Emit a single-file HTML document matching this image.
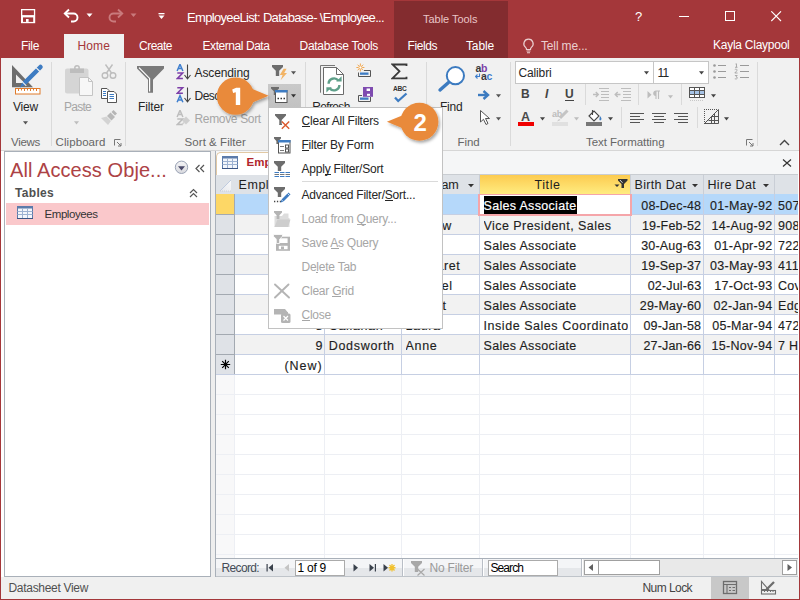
<!DOCTYPE html>
<html><head><meta charset="utf-8"><style>
html,body{margin:0;padding:0;width:800px;height:600px;overflow:hidden;background:#fff}
body{position:relative;font-family:"Liberation Sans",sans-serif}
body>div,body>svg{position:absolute;box-sizing:border-box}
</style></head><body>
<div style="left:0px;top:0px;width:800px;height:58px;background:#A4373A;"></div>
<div style="left:394px;top:1px;width:114px;height:57px;background:#832C2F;"></div>
<div style="left:64px;top:34px;width:60px;height:24px;background:#F1F1F1;"></div>
<div style="left:187.00px;top:11px;font-size:13px;line-height:13px;color:#fff;letter-spacing:-0.670px;white-space:nowrap;">EmployeeList: Database- \Employee...</div>
<div style="left:423.00px;top:14px;font-size:11px;line-height:11px;color:#E9C5C6;letter-spacing:-0.030px;white-space:nowrap;">Table Tools</div>
<div style="left:21.00px;top:40px;font-size:12px;line-height:12px;color:#fff;letter-spacing:-0.334px;white-space:nowrap;">File</div>
<div style="left:139.00px;top:40px;font-size:12px;line-height:12px;color:#fff;letter-spacing:-0.503px;white-space:nowrap;">Create</div>
<div style="left:202.50px;top:40px;font-size:12px;line-height:12px;color:#fff;letter-spacing:-0.439px;white-space:nowrap;">External Data</div>
<div style="left:299.50px;top:40px;font-size:12px;line-height:12px;color:#fff;letter-spacing:-0.286px;white-space:nowrap;">Database Tools</div>
<div style="left:407.50px;top:40px;font-size:12px;line-height:12px;color:#fff;letter-spacing:-0.418px;white-space:nowrap;">Fields</div>
<div style="left:466.00px;top:40px;font-size:12px;line-height:12px;color:#fff;letter-spacing:-0.138px;white-space:nowrap;">Table</div>
<div style="left:77.50px;top:40px;font-size:12px;line-height:12px;color:#A4373A;letter-spacing:0.123px;white-space:nowrap;">Home</div>
<div style="left:541.00px;top:40px;font-size:12px;line-height:12px;color:#EBCFD0;letter-spacing:-0.151px;white-space:nowrap;">Tell me...</div>
<div style="left:713.00px;top:39px;font-size:12px;line-height:12px;color:#fff;letter-spacing:-0.253px;white-space:nowrap;">Kayla Claypool</div>
<svg style="left:20px;top:8px;" width="16" height="16" viewBox="0 0 16 16"><rect x="1" y="1" width="14.2" height="14.2" fill="#fff"/><rect x="2.3" y="2.3" width="11.6" height="4.8" fill="#A4373A"/><rect x="3" y="9.4" width="10.2" height="4.5" fill="#A4373A"/><rect x="6" y="11" width="2.6" height="2.9" fill="#fff"/></svg>
<svg style="left:63px;top:8px;" width="17" height="15" viewBox="0 0 17 15"><path d="M2 5.5H10.5A4 4 0 0 1 10.5 13.5H8" fill="none" stroke="#fff" stroke-width="1.9"/><path d="M6 1.5L1.8 5.5L6 9.5" fill="none" stroke="#fff" stroke-width="1.9"/></svg>
<svg style="left:86px;top:13px;" width="7" height="5" viewBox="0 0 7 5"><path d="M0.5 0.5H6.5L3.5 4Z" fill="#fff"/></svg>
<svg style="left:107px;top:8px;" width="17" height="15" viewBox="0 0 17 15"><path d="M15 5.5H6.5A4 4 0 0 0 6.5 13.5H9" fill="none" stroke="#C97A7C" stroke-width="1.9"/><path d="M11 1.5L15.2 5.5L11 9.5" fill="none" stroke="#C97A7C" stroke-width="1.9"/></svg>
<svg style="left:130px;top:13px;" width="7" height="5" viewBox="0 0 7 5"><path d="M0.5 0.5H6.5L3.5 4Z" fill="#C97A7C"/></svg>
<svg style="left:158px;top:12px;" width="7" height="8" viewBox="0 0 7 8"><rect x="0.5" y="1" width="6" height="1.3" fill="#fff"/><path d="M0.5 3.5H6.5L3.5 7Z" fill="#fff"/></svg>
<div style="left:635.00px;top:10px;font-size:13px;line-height:13px;color:#fff;white-space:nowrap;">?</div>
<div style="left:679px;top:16px;width:10px;height:1px;background:#fff;"></div>
<div style="left:725px;top:11px;width:10px;height:10px;background:transparent;border:1px solid #fff;"></div>
<svg style="left:771px;top:11px;" width="11" height="11" viewBox="0 0 11 11"><path d="M0.3 0.3L10 10M10 0.3L0.3 10" stroke="#fff" stroke-width="1.1"/></svg>
<svg style="left:522px;top:38px;" width="13" height="16" viewBox="0 0 13 16"><path d="M6.5 1.2A4.6 4.6 0 0 0 3.6 9.4C4.3 10 4.5 10.6 4.5 11.5H8.5C8.5 10.6 8.7 10 9.4 9.4A4.6 4.6 0 0 0 6.5 1.2Z" fill="none" stroke="#EBCFD0" stroke-width="1.2"/><path d="M4.5 13H8.5M5 14.8H8" stroke="#EBCFD0" stroke-width="1.1"/></svg>
<div style="left:0px;top:58px;width:800px;height:92px;background:#F1F1F1;"></div>
<div style="left:0px;top:150px;width:800px;height:1px;background:#D6D6D6;"></div>
<div style="left:51px;top:62px;width:1px;height:84px;background:#DADADA;"></div>
<div style="left:125px;top:62px;width:1px;height:84px;background:#DADADA;"></div>
<div style="left:305px;top:62px;width:1px;height:84px;background:#DADADA;"></div>
<div style="left:426px;top:62px;width:1px;height:84px;background:#DADADA;"></div>
<div style="left:510px;top:62px;width:1px;height:84px;background:#DADADA;"></div>
<div style="left:757px;top:62px;width:1px;height:84px;background:#DADADA;"></div>
<div style="left:11.00px;top:137px;font-size:11.5px;line-height:11.5px;color:#666666;letter-spacing:-0.294px;white-space:nowrap;">Views</div>
<div style="left:55.50px;top:137px;font-size:11.5px;line-height:11.5px;color:#666666;letter-spacing:0.086px;white-space:nowrap;">Clipboard</div>
<div style="left:184.60px;top:137px;font-size:11.5px;line-height:11.5px;color:#666666;letter-spacing:0.046px;white-space:nowrap;">Sort &amp; Filter</div>
<div style="left:457.50px;top:137px;font-size:11.5px;line-height:11.5px;color:#666666;letter-spacing:-0.093px;white-space:nowrap;">Find</div>
<div style="left:586.00px;top:137px;font-size:11.5px;line-height:11.5px;color:#666666;letter-spacing:-0.050px;white-space:nowrap;">Text Formatting</div>
<div style="left:13.00px;top:100.5px;font-size:12px;line-height:12px;color:#262626;letter-spacing:-0.198px;white-space:nowrap;">View</div>
<div style="left:64.00px;top:100.5px;font-size:12px;line-height:12px;color:#A6A6A6;letter-spacing:-0.737px;white-space:nowrap;">Paste</div>
<div style="left:138.00px;top:100.5px;font-size:12px;line-height:12px;color:#262626;letter-spacing:-0.111px;white-space:nowrap;">Filter</div>
<div style="left:194.50px;top:67px;font-size:12px;line-height:12px;color:#262626;letter-spacing:-0.115px;white-space:nowrap;">Ascending</div>
<div style="left:194.50px;top:89.5px;font-size:12px;line-height:12px;color:#262626;letter-spacing:-0.537px;white-space:nowrap;">Descending</div>
<div style="left:194.50px;top:113px;font-size:12px;line-height:12px;color:#A6A6A6;letter-spacing:-0.339px;white-space:nowrap;">Remove Sort</div>
<div style="left:312.30px;top:100.5px;font-size:12px;line-height:12px;color:#262626;letter-spacing:-0.660px;white-space:nowrap;">Refresh</div>
<div style="left:440.00px;top:100.5px;font-size:12px;line-height:12px;color:#262626;letter-spacing:-0.211px;white-space:nowrap;">Find</div>
<svg style="left:8px;top:60px;" width="40" height="40" viewBox="0 0 40 40"><path d="M4 5V27.2H25Z" fill="#6D6D6D"/><path d="M8 14.5V23H16.5Z" fill="#F1F1F1"/><path d="M14.4 21.9L17.6 25.1L12 27.6Z" fill="#3E7CC2"/><path d="M14.4 21.9L30.9 5.4Q32.5 3.8 34.1 5.4Q35.7 7 34.1 8.6L17.6 25.1Z" fill="#3E7CC2"/><path d="M13.6 21.2L18.3 25.9M28 7.6L32.4 12" stroke="#F1F1F1" stroke-width="1.1"/><rect x="7.5" y="28.5" width="24.5" height="5.5" fill="#fff" stroke="#E07B2B" stroke-width="1"/><path d="M10.5 29V31M13.5 29V30.5M16.5 29V31M19.5 29V30.5M22.5 29V31M25.5 29V30.5M28.5 29V31" stroke="#E07B2B" stroke-width="1"/></svg>
<svg style="left:23px;top:121px;" width="5" height="4" viewBox="0 0 5 4"><path d="M0 0.3H5L2.5 3.6Z" fill="#555"/></svg>
<svg style="left:62px;top:64px;" width="34" height="34" viewBox="0 0 34 34"><rect x="3" y="4.5" width="23.5" height="25" rx="2" fill="#D5D5D5"/><rect x="8" y="4.5" width="14" height="4.5" fill="#BDBDBD"/><circle cx="15" cy="4" r="2.2" fill="none" stroke="#BDBDBD" stroke-width="1.5"/><path d="M17.5 13.5H26.5L30.5 17.5V31.5H17.5Z" fill="#F7F7F7" stroke="#C4C4C4" stroke-width="1"/><path d="M26.5 13.5V17.5H30.5" fill="none" stroke="#C4C4C4"/></svg>
<svg style="left:74px;top:121px;" width="5" height="4" viewBox="0 0 5 4"><path d="M0 0.3H5L2.5 3.6Z" fill="#BDBDBD"/></svg>
<svg style="left:100px;top:63px;" width="18" height="17" viewBox="0 0 18 17"><g fill="none" stroke="#BDBDBD" stroke-width="1.4"><circle cx="5" cy="12.5" r="2.8"/><circle cx="13" cy="12.5" r="2.8"/><path d="M6.5 10L12.5 1.5M11.5 10L5.5 1.5"/></g></svg>
<svg style="left:100px;top:87px;" width="18" height="17" viewBox="0 0 18 17"><path d="M1.5 1.5H7L9 3.5V11.5H1.5Z" fill="#fff" stroke="#555" stroke-width="1"/><path d="M7.5 4.5H14L16.5 7V15.5H7.5Z" fill="#fff" stroke="#555" stroke-width="1"/><path d="M3 4.5H6M3 6.5H6M3 8.5H6M9.5 7.5H14M9.5 9.5H14M9.5 11.5H14" stroke="#3E7CC2" stroke-width="1"/></svg>
<svg style="left:100px;top:109px;" width="19" height="17" viewBox="0 0 19 17"><path d="M13.5 1L17 4.5L15 6.5L11.5 3Z" fill="#B5B5B5"/><path d="M10.5 3.5L15 8L11.5 11.5L7 7Z" fill="#B8B8B8"/><path d="M6.5 7.5L11 12L8 16L1 9Z" fill="#D3D3D3"/></svg>
<svg style="left:114px;top:139px;" width="8" height="8" viewBox="0 0 8 8"><path d="M0.5 6.5V0.5H6.5" fill="none" stroke="#777" stroke-width="1"/><path d="M3 3L7 7M7 4V7H4" fill="none" stroke="#777" stroke-width="1"/></svg>
<svg style="left:746px;top:139px;" width="8" height="8" viewBox="0 0 8 8"><path d="M0.5 6.5V0.5H6.5" fill="none" stroke="#777" stroke-width="1"/><path d="M3 3L7 7M7 4V7H4" fill="none" stroke="#777" stroke-width="1"/></svg>
<svg style="left:130px;top:60px;" width="40" height="40" viewBox="0 0 40 40"><path d="M7 6H34V8.6L23 19.7V32.7H18V19.7L7 8.6Z" fill="#7A7A7A"/><path d="M9 7.6L19.6 18.4V31.6" fill="none" stroke="#fff" stroke-width="1.2"/></svg>
<svg style="left:176px;top:64px;" width="16" height="16" viewBox="0 0 16 16"><path d="M1.1 7L4.0 0.3L6.9 7M2.3 4.6H5.7" fill="none" stroke="#3F7FCE" stroke-width="1.5"/><path d="M1.3 9.100000000000001H6.7L1.3 14.600000000000001H6.9" fill="none" stroke="#7D3FA8" stroke-width="1.5"/><path d="M11.5 0.5V14.5" stroke="#444" stroke-width="1.1"/><path d="M8.5 11L11.5 14.8L14.5 11" fill="none" stroke="#444" stroke-width="1.1"/></svg>
<svg style="left:176px;top:87px;" width="16" height="16" viewBox="0 0 16 16"><path d="M1.3 0.8H6.7L1.3 6.3H6.9" fill="none" stroke="#7D3FA8" stroke-width="1.5"/><path d="M1.1 15.3L4.0 8.600000000000001L6.9 15.3M2.3 12.9H5.7" fill="none" stroke="#3F7FCE" stroke-width="1.5"/><path d="M11.5 0.5V14.5" stroke="#444" stroke-width="1.1"/><path d="M8.5 11L11.5 14.8L14.5 11" fill="none" stroke="#444" stroke-width="1.1"/></svg>
<svg style="left:176px;top:110px;" width="16" height="16" viewBox="0 0 16 16"><path d="M1.1 7L4.0 0.3L6.9 7M2.3 4.6H5.7" fill="none" stroke="#BDBDBD" stroke-width="1.5"/><path d="M1.3 9.100000000000001H6.7L1.3 14.600000000000001H6.9" fill="none" stroke="#BDBDBD" stroke-width="1.5"/></svg>
<svg style="left:181px;top:115px;" width="10" height="11" viewBox="0 0 10 11"><path d="M5 1.5L9 5.5L5 9.5L1 5.5Z" fill="#CFCFCF"/><path d="M1 9.5L3 7.5" stroke="#CFCFCF" stroke-width="1.5"/></svg>
<svg style="left:271px;top:64px;" width="17" height="17" viewBox="0 0 17 17"><path d="M1 1H12V3L8.2 6.8V12H4.8V6.8L1 3Z" fill="#6D6D6D"/><path d="M12.6 4.8L8.8 11H11.6L9.6 16.2L16 9H13.2L15.6 4.8Z" fill="#F2B466"/></svg>
<svg style="left:291px;top:71px;" width="5" height="4" viewBox="0 0 5 4"><path d="M0 0.3H5L2.5 3.6Z" fill="#555"/></svg>
<div style="left:268px;top:84px;width:33px;height:23px;background:linear-gradient(#C9C9C9,#C2C2C2)"></div>
<svg style="left:270px;top:86px;" width="19" height="18" viewBox="0 0 19 18"><path d="M1 1H9V2.5L6.2 5.3V9H3.8V5.3L1 2.5Z" fill="#6D6D6D"/><rect x="5.5" y="4.5" width="11.5" height="12" fill="#fff" stroke="#555" stroke-width="1"/><rect x="5" y="4" width="12.5" height="2.5" fill="#3E7CC2"/><path d="M7.5 12.5H9M10.5 12.5H12M13.5 12.5H15" stroke="#333" stroke-width="1.4"/></svg>
<svg style="left:291px;top:94px;" width="5" height="4" viewBox="0 0 5 4"><path d="M0 0.3H5L2.5 3.6Z" fill="#333"/></svg>
<svg style="left:318px;top:63px;" width="28" height="34" viewBox="0 0 28 34"><path d="M2.5 29.7V2.5H17" fill="none" stroke="#777" stroke-width="1"/><path d="M5.5 4.5H18.5L25.5 11.5V31.5H5.5Z" fill="#fff" stroke="#6A6A6A" stroke-width="1"/><path d="M18.5 4.5V11.5H25.5" fill="none" stroke="#6A6A6A" stroke-width="1"/><path d="M10.6 20.8A5.4 5.4 0 0 1 20.3 17.6" fill="none" stroke="#5FA08A" stroke-width="2.4"/><path d="M18.2 18.6H23.6V13.2Z" fill="#5FA08A"/><path d="M21.4 22A5.4 5.4 0 0 1 11.7 25.2" fill="none" stroke="#5FA08A" stroke-width="2.4"/><path d="M13.8 24.2H8.4V29.6Z" fill="#5FA08A"/></svg>
<svg style="left:356px;top:62px;" width="17" height="16" viewBox="0 0 17 16"><g stroke="#F0A040" stroke-width="0.9"><path d="M4.4 1.5V3.5M4.4 7.5V9.5M0.4 5.5H2.4M6.4 5.5H8.4M1.6 2.7L3 4.1M5.8 6.9L7.2 8.3M7.2 2.7L5.8 4.1M3 6.9L1.6 8.3"/><circle cx="4.4" cy="5.5" r="1.6" fill="#fff"/></g><path d="M8 8.5H14.5V14.5H2.5V10.5" fill="none" stroke="#555" stroke-width="1"/><rect x="4" y="10.5" width="8.5" height="2.3" fill="#3E7CC2"/></svg>
<svg style="left:356px;top:86px;" width="18" height="17" viewBox="0 0 18 17"><path d="M6 9.5H2.5V15.5H14.5V11" fill="none" stroke="#555" stroke-width="1"/><rect x="4" y="11.5" width="8.5" height="2.3" fill="#3E7CC2"/><rect x="7" y="1" width="10" height="9.8" fill="#7E4BB0"/><rect x="10.6" y="2.5" width="3.4" height="2.5" fill="#fff"/><rect x="11" y="7.8" width="3" height="2" fill="#fff"/></svg>
<svg style="left:391px;top:63px;" width="17" height="17" viewBox="0 0 17 17"><path d="M15.5 3V1.5H1.5L8.5 8.3L1.5 15.3H15.5V13.8" fill="none" stroke="#3A3A3A" stroke-width="1.8" stroke-linejoin="miter"/></svg>
<div style="left:393px;top:86px;font:bold 6.6px/6px 'Liberation Sans';color:#333;letter-spacing:-0.2px">ABC</div>
<svg style="left:393px;top:92px;" width="15" height="11" viewBox="0 0 15 11"><path d="M2 5.5L5.2 9L13.5 1.5" fill="none" stroke="#3E7CC2" stroke-width="2.3"/></svg>
<svg style="left:436px;top:64px;" width="30" height="30" viewBox="0 0 30 30"><circle cx="19.4" cy="11.7" r="8.6" fill="#fff" stroke="#3C7BC0" stroke-width="2"/><path d="M12.5 18.5L4 26" stroke="#3C7BC0" stroke-width="3.4" stroke-linecap="round"/></svg>
<div style="left:475.5px;top:62.5px;font:bold 10.5px/10px 'Liberation Sans';color:#3A3A3A;white-space:nowrap;letter-spacing:-0.4px">a<span style="color:#7D3FA8">b</span></div>
<div style="left:481px;top:71px;font:bold 10.5px/10px 'Liberation Sans';color:#3A3A3A;white-space:nowrap;letter-spacing:-0.4px">a<span style="color:#3F7FCE">c</span></div>
<svg style="left:475px;top:73px;" width="6" height="6" viewBox="0 0 6 6"><path d="M4.5 0.5V3.5H1" fill="none" stroke="#3F7FCE" stroke-width="1.1"/><path d="M2.5 1.5L0.5 3.5L2.5 5.5" fill="none" stroke="#3F7FCE" stroke-width="1.1"/></svg>
<svg style="left:477px;top:90px;" width="13" height="10" viewBox="0 0 13 10"><path d="M1 5H10" stroke="#3C7BC0" stroke-width="2.4"/><path d="M6.5 1L11 5L6.5 9" fill="none" stroke="#3C7BC0" stroke-width="2.4"/></svg>
<svg style="left:496px;top:94px;" width="5" height="4" viewBox="0 0 5 4"><path d="M0 0.3H5L2.5 3.6Z" fill="#555"/></svg>
<svg style="left:479px;top:109px;" width="11" height="17" viewBox="0 0 11 17"><path d="M1.5 1.5V13L4.5 10.3L7 15.5L9 14.5L6.5 9.5H10.5Z" fill="#fff" stroke="#555" stroke-width="1" stroke-linejoin="round"/></svg>
<svg style="left:496px;top:117px;" width="5" height="4" viewBox="0 0 5 4"><path d="M0 0.3H5L2.5 3.6Z" fill="#555"/></svg>
<svg style="left:644px;top:71px;" width="5" height="4" viewBox="0 0 5 4"><path d="M0 0.3H5L2.5 3.6Z" fill="#444"/></svg>
<svg style="left:699px;top:71px;" width="5" height="4" viewBox="0 0 5 4"><path d="M0 0.3H5L2.5 3.6Z" fill="#444"/></svg>
<svg style="left:712px;top:63px;" width="15" height="17" viewBox="0 0 15 17"><g fill="#9A9A9A"><circle cx="2.5" cy="2.5" r="1.3"/><circle cx="2.5" cy="8.5" r="1.3"/><circle cx="2.5" cy="14.5" r="1.3"/></g><path d="M6 2.5H14M6 8.5H14M6 14.5H14" stroke="#9A9A9A" stroke-width="1"/></svg>
<svg style="left:734px;top:63px;" width="16" height="17" viewBox="0 0 16 17"><path d="M1.5 1L2.5 0.8V4.2M1 4.3H3.5M0.8 6.6Q1.5 6 2.5 6.2Q3.4 6.6 2.8 7.8L0.8 10H3.6M0.9 12.5H3.2L2 13.8Q3.6 14 3.3 15.3Q2.6 16.4 0.8 15.8" fill="none" stroke="#9A9A9A" stroke-width="0.8"/><path d="M6 2.5H15M6 8.5H15M6 14.5H15" stroke="#9A9A9A" stroke-width="1"/></svg>
<div style="left:521px;top:88px;font:bold 12px/12px 'Liberation Sans';color:#444">B</div>
<div style="left:545px;top:88px;font:italic bold 12px/12px 'Liberation Sans';color:#444">I</div>
<div style="left:565px;top:88px;font:bold 12px/12px 'Liberation Sans';color:#444">U</div>
<div style="left:565px;top:100px;width:9px;height:1px;background:#444;"></div>
<div style="left:585px;top:84px;width:1px;height:21px;background:#DADADA;"></div>
<div style="left:638px;top:84px;width:1px;height:21px;background:#DADADA;"></div>
<div style="left:681px;top:84px;width:1px;height:21px;background:#DADADA;"></div>
<div style="left:621px;top:107px;width:1px;height:21px;background:#DADADA;"></div>
<div style="left:697px;top:107px;width:1px;height:21px;background:#DADADA;"></div>
<svg style="left:592px;top:87px;" width="18" height="15" viewBox="0 0 18 15"><path d="M7 1.5H17M9 4.5H17M9 7.5H17M9 10.5H17M7 13.5H17" stroke="#BDBDBD" stroke-width="1"/><path d="M1 7.5H6M3.8 5L6.3 7.5L3.8 10" fill="none" stroke="#BDBDBD" stroke-width="1.4"/></svg>
<svg style="left:614px;top:87px;" width="18" height="15" viewBox="0 0 18 15"><path d="M7 1.5H17M9 4.5H17M9 7.5H17M9 10.5H17M7 13.5H17" stroke="#BDBDBD" stroke-width="1"/><path d="M1.2 7.5H6.5M3.7 5L1.2 7.5L3.7 10" fill="none" stroke="#BDBDBD" stroke-width="1.4"/></svg>
<svg style="left:647px;top:90px;" width="14" height="10" viewBox="0 0 14 10"><path d="M0.5 1V8.5L4.5 4.75Z" fill="#BDBDBD"/><path d="M9 1H13M9 1V9M11.5 1V9M9 1A2.2 2.2 0 0 0 9 5.5" fill="#BDBDBD" stroke="#BDBDBD" stroke-width="1.1"/></svg>
<svg style="left:668px;top:95px;" width="5" height="4" viewBox="0 0 5 4"><path d="M0 0.3H5L2.5 3.6Z" fill="#BDBDBD"/></svg>
<svg style="left:688px;top:86px;" width="18" height="17" viewBox="0 0 18 17"><rect x="1.5" y="1.5" width="15" height="10" fill="#fff" stroke="#555" stroke-width="1"/><rect x="2" y="5" width="14" height="3" fill="#A6C3E6"/><path d="M1.5 4.5H16.5M1.5 8.5H16.5M6.5 1.5V11.5M11.5 1.5V11.5" stroke="#555" stroke-width="1"/><path d="M2 14.5H16" stroke="#C8C8C8" stroke-width="1" stroke-dasharray="1 1"/></svg>
<svg style="left:711px;top:94px;" width="5" height="4" viewBox="0 0 5 4"><path d="M0 0.3H5L2.5 3.6Z" fill="#444"/></svg>
<div style="left:521px;top:110.5px;font:bold 12.5px/13px 'Liberation Sans';color:#4A4A4A">A</div>
<div style="left:518px;top:122px;width:16px;height:4px;background:#F00000;"></div>
<svg style="left:540px;top:117px;" width="5" height="4" viewBox="0 0 5 4"><path d="M0 0.3H5L2.5 3.6Z" fill="#444"/></svg>
<div style="left:552px;top:110px;font:bold 9px/9px 'Liberation Sans';color:#BDBDBD;letter-spacing:-0.3px">ab</div>
<svg style="left:554px;top:109px;" width="15" height="14" viewBox="0 0 15 14"><path d="M13.5 1.5L6 9" stroke="#C4C4C4" stroke-width="3"/><path d="M5 10L3 12.5L6.5 11Z" fill="#C4C4C4"/></svg>
<div style="left:552px;top:122px;width:16px;height:4px;background:#E0E0E0;"></div>
<svg style="left:574px;top:117px;" width="5" height="4" viewBox="0 0 5 4"><path d="M0 0.3H5L2.5 3.6Z" fill="#BDBDBD"/></svg>
<svg style="left:585px;top:109px;" width="19" height="18" viewBox="0 0 19 18"><path d="M4 7L9 2L14 7L9 12Z" fill="#fff" stroke="#444" stroke-width="1.1"/><path d="M7.5 1V6" stroke="#444" stroke-width="1.1"/><path d="M15 7C16.5 9 17 10 16 11C15 12 14 11 14.5 9.5Z" fill="#3E7CC2"/><rect x="1" y="13" width="16" height="4" fill="#777"/></svg>
<svg style="left:608px;top:117px;" width="5" height="4" viewBox="0 0 5 4"><path d="M0 0.3H5L2.5 3.6Z" fill="#444"/></svg>
<svg style="left:630px;top:113px;" width="14" height="11" viewBox="0 0 14 11"><path d="M0 0.5H14M0 3.5H10M0 6.5H14M0 9.5H10" stroke="#555" stroke-width="1"/></svg>
<svg style="left:652px;top:113px;" width="14" height="11" viewBox="0 0 14 11"><path d="M0 0.5H14M2 3.5H12M0 6.5H14M2 9.5H12" stroke="#555" stroke-width="1"/></svg>
<svg style="left:674px;top:113px;" width="14" height="11" viewBox="0 0 14 11"><path d="M0 0.5H14M4 3.5H14M0 6.5H14M4 9.5H14" stroke="#555" stroke-width="1"/></svg>
<svg style="left:703px;top:108px;" width="17" height="17" viewBox="0 0 17 17"><path d="M1.5 16V2M1 1.5H15" fill="none" stroke="#555" stroke-width="1" stroke-dasharray="1 1"/><path d="M1.5 15.5L15.5 1.5V15.5Z" fill="none" stroke="#555" stroke-width="1"/><path d="M11.5 5.5V15.5M8.5 8.5V15.5M5.5 12.5H15.5M8.5 8.5H15.5" stroke="#555" stroke-width="1"/></svg>
<svg style="left:723.5px;top:117px;" width="5" height="4" viewBox="0 0 5 4"><path d="M0 0.3H5L2.5 3.6Z" fill="#444"/></svg>
<svg style="left:779px;top:139px;" width="11" height="7" viewBox="0 0 11 7"><path d="M1 6L5.5 1.5L10 6" fill="none" stroke="#444" stroke-width="1.4"/></svg>
<div style="left:515px;top:61px;width:139px;height:23px;background:#fff;border:1px solid #C6C6C6;"></div>
<div style="left:653px;top:61px;width:56px;height:23px;background:#fff;border:1px solid #C6C6C6;"></div>
<div style="left:518.50px;top:67px;font-size:12px;line-height:12px;color:#262626;letter-spacing:-0.144px;white-space:nowrap;">Calibri</div>
<div style="left:657.60px;top:67px;font-size:12px;line-height:12px;color:#262626;letter-spacing:-0.929px;white-space:nowrap;">11</div>
<svg style="left:644px;top:71px;" width="5" height="4" viewBox="0 0 5 4"><path d="M0 0.3H5L2.5 3.6Z" fill="#444"/></svg>
<svg style="left:699px;top:71px;" width="5" height="4" viewBox="0 0 5 4"><path d="M0 0.3H5L2.5 3.6Z" fill="#444"/></svg>
<div style="left:0px;top:151px;width:800px;height:426px;background:#fff;"></div>
<div style="left:4px;top:151px;width:207px;height:426px;background:#fff;border:1px solid #A9B0B9;"></div>
<div style="left:10.00px;top:160px;font-size:20px;line-height:20px;color:#AD4245;letter-spacing:0.077px;white-space:nowrap;">All Access Obje...</div>
<svg style="left:174px;top:160px;" width="15" height="15" viewBox="0 0 15 15"><defs><linearGradient id="dg" x1="0" y1="0" x2="0" y2="1"><stop offset="0" stop-color="#F4F4F6"/><stop offset="1" stop-color="#D8D9DE"/></linearGradient></defs><circle cx="7.5" cy="7.3" r="6.2" fill="url(#dg)" stroke="#9AA3B5" stroke-width="1"/><path d="M4 6.3H11L7.5 10.4Z" fill="#4A4A6A"/></svg>
<svg style="left:195px;top:164px;" width="10" height="9" viewBox="0 0 10 9"><path d="M4.5 1L1 4.5L4.5 8M9 1L5.5 4.5L9 8" fill="none" stroke="#555" stroke-width="1.2"/></svg>
<svg style="left:189px;top:188px;" width="9" height="10" viewBox="0 0 9 10"><path d="M1 5L4.5 1.5L8 5M1 9L4.5 5.5L8 9" fill="none" stroke="#555" stroke-width="1.2"/></svg>
<div style="left:15.00px;top:187px;font-size:12px;line-height:12px;color:#505050;font-weight:bold;letter-spacing:0.312px;white-space:nowrap;">Tables</div>
<div style="left:6px;top:203px;width:203px;height:22px;background:#FAC8CB;"></div>
<svg style="left:17px;top:206px;" width="16" height="13" viewBox="0 0 16 13"><rect x="0.5" y="0.5" width="15" height="12" fill="#F3F6FB" stroke="#5C7BAA" stroke-width="1"/><rect x="0" y="0" width="16" height="2.5" fill="#5C7BAA"/><path d="M0.5 5.5H15.5M0.5 8.5H15.5M5.5 2.5V12.5M10.5 2.5V12.5" stroke="#9DB2D2" stroke-width="1"/><path d="M0 12.5H16" stroke="#3B5584" stroke-width="1"/></svg>
<div style="left:44.50px;top:208.5px;font-size:11.5px;line-height:11.5px;color:#333;letter-spacing:-0.432px;white-space:nowrap;">Employees</div>
<div style="left:211px;top:151px;width:4px;height:426px;background:#EEEEEE;"></div>
<div style="left:215px;top:151px;width:1px;height:426px;background:#A9B0B9;"></div>
<div style="left:216px;top:151px;width:582px;height:24px;background:#F5F6F7;"></div>
<div style="left:216px;top:174px;width:582px;height:1px;background:#C9CDD2;"></div>
<div style="left:216px;top:375px;width:582px;height:183px;background:#fff;"></div>
<div style="left:216px;top:375px;width:18px;height:183px;background:#F8F8F9;"></div>
<div style="left:216px;top:394px;width:582px;height:1px;background:#EDEFF4;"></div>
<div style="left:216px;top:414px;width:582px;height:1px;background:#EDEFF4;"></div>
<div style="left:216px;top:434px;width:582px;height:1px;background:#EDEFF4;"></div>
<div style="left:216px;top:454px;width:582px;height:1px;background:#EDEFF4;"></div>
<div style="left:216px;top:474px;width:582px;height:1px;background:#EDEFF4;"></div>
<div style="left:216px;top:494px;width:582px;height:1px;background:#EDEFF4;"></div>
<div style="left:216px;top:514px;width:582px;height:1px;background:#EDEFF4;"></div>
<div style="left:216px;top:534px;width:582px;height:1px;background:#EDEFF4;"></div>
<div style="left:216px;top:554px;width:582px;height:1px;background:#EDEFF4;"></div>
<div style="left:234px;top:375px;width:1px;height:183px;background:#EDEFF4;"></div>
<div style="left:324px;top:375px;width:1px;height:183px;background:#EDEFF4;"></div>
<div style="left:401px;top:375px;width:1px;height:183px;background:#EDEFF4;"></div>
<div style="left:479px;top:375px;width:1px;height:183px;background:#EDEFF4;"></div>
<div style="left:630px;top:375px;width:1px;height:183px;background:#EDEFF4;"></div>
<div style="left:703px;top:375px;width:1px;height:183px;background:#EDEFF4;"></div>
<div style="left:774px;top:375px;width:1px;height:183px;background:#EDEFF4;"></div>
<div style="left:234px;top:194px;width:564px;height:20px;background:#B5D8FA;"></div>
<div style="left:216px;top:194px;width:18px;height:20px;background:#FDD766;"></div>
<div style="left:234px;top:214px;width:564px;height:20px;background:#F2F2F2;"></div>
<div style="left:216px;top:214px;width:18px;height:20px;background:#DFE2E7;"></div>
<div style="left:234px;top:234px;width:564px;height:20px;background:#FFFFFF;"></div>
<div style="left:216px;top:234px;width:18px;height:20px;background:#DFE2E7;"></div>
<div style="left:234px;top:254px;width:564px;height:20px;background:#F2F2F2;"></div>
<div style="left:216px;top:254px;width:18px;height:20px;background:#DFE2E7;"></div>
<div style="left:234px;top:274px;width:564px;height:20px;background:#FFFFFF;"></div>
<div style="left:216px;top:274px;width:18px;height:20px;background:#DFE2E7;"></div>
<div style="left:234px;top:294px;width:564px;height:20px;background:#F2F2F2;"></div>
<div style="left:216px;top:294px;width:18px;height:20px;background:#DFE2E7;"></div>
<div style="left:234px;top:314px;width:564px;height:20px;background:#FFFFFF;"></div>
<div style="left:216px;top:314px;width:18px;height:20px;background:#DFE2E7;"></div>
<div style="left:234px;top:334px;width:564px;height:20px;background:#F2F2F2;"></div>
<div style="left:216px;top:334px;width:18px;height:20px;background:#DFE2E7;"></div>
<div style="left:234px;top:354px;width:564px;height:20px;background:#FFFFFF;"></div>
<div style="left:216px;top:354px;width:18px;height:20px;background:#DFE2E7;"></div>
<div style="left:216px;top:214px;width:18px;height:1px;background:#A3A9B1;"></div>
<div style="left:235px;top:214px;width:563px;height:1px;background:#C6CFE3;"></div>
<div style="left:216px;top:234px;width:18px;height:1px;background:#A3A9B1;"></div>
<div style="left:235px;top:234px;width:563px;height:1px;background:#C6CFE3;"></div>
<div style="left:216px;top:254px;width:18px;height:1px;background:#A3A9B1;"></div>
<div style="left:235px;top:254px;width:563px;height:1px;background:#C6CFE3;"></div>
<div style="left:216px;top:274px;width:18px;height:1px;background:#A3A9B1;"></div>
<div style="left:235px;top:274px;width:563px;height:1px;background:#C6CFE3;"></div>
<div style="left:216px;top:294px;width:18px;height:1px;background:#A3A9B1;"></div>
<div style="left:235px;top:294px;width:563px;height:1px;background:#C6CFE3;"></div>
<div style="left:216px;top:314px;width:18px;height:1px;background:#A3A9B1;"></div>
<div style="left:235px;top:314px;width:563px;height:1px;background:#C6CFE3;"></div>
<div style="left:216px;top:334px;width:18px;height:1px;background:#A3A9B1;"></div>
<div style="left:235px;top:334px;width:563px;height:1px;background:#C6CFE3;"></div>
<div style="left:216px;top:354px;width:18px;height:1px;background:#A3A9B1;"></div>
<div style="left:235px;top:354px;width:563px;height:1px;background:#C6CFE3;"></div>
<div style="left:216px;top:374px;width:18px;height:1px;background:#A3A9B1;"></div>
<div style="left:235px;top:374px;width:563px;height:1px;background:#C6CFE3;"></div>
<div style="left:324px;top:194px;width:1px;height:181px;background:#C6CFE3;"></div>
<div style="left:401px;top:194px;width:1px;height:181px;background:#C6CFE3;"></div>
<div style="left:479px;top:194px;width:1px;height:181px;background:#C6CFE3;"></div>
<div style="left:630px;top:194px;width:1px;height:181px;background:#C6CFE3;"></div>
<div style="left:703px;top:194px;width:1px;height:181px;background:#C6CFE3;"></div>
<div style="left:774px;top:194px;width:1px;height:181px;background:#C6CFE3;"></div>
<div style="left:234px;top:175px;width:1px;height:200px;background:#A3A9B1;"></div>
<div style="left:216px;top:175px;width:582px;height:19px;background:#DEE2E7;"></div>
<div style="left:480px;top:175px;width:150px;height:19px;background:linear-gradient(#FCCB50,#FFEC80)"></div>
<div style="left:324px;top:175px;width:1px;height:19px;background:#C9CED6;"></div>
<div style="left:401px;top:175px;width:1px;height:19px;background:#C9CED6;"></div>
<div style="left:479px;top:175px;width:1px;height:19px;background:#C9CED6;"></div>
<div style="left:630px;top:175px;width:1px;height:19px;background:#C9CED6;"></div>
<div style="left:703px;top:175px;width:1px;height:19px;background:#C9CED6;"></div>
<div style="left:774px;top:175px;width:1px;height:19px;background:#C9CED6;"></div>
<div style="left:234px;top:175px;width:1px;height:19px;background:#DEE2E7;"></div>
<svg style="left:219px;top:179px;" width="13" height="13" viewBox="0 0 13 13"><defs><linearGradient id="sa" x1="0" y1="1" x2="1" y2="0"><stop offset="0" stop-color="#E6E8EC"/><stop offset="1" stop-color="#FAFAFB"/></linearGradient></defs><path d="M1 12L12 1V12Z" fill="url(#sa)"/><path d="M1 12L12 1" stroke="#B5C3DA" stroke-width="0.8"/><path d="M1 12H12" stroke="#C8CCD3" stroke-width="0.8" stroke-dasharray="1 1"/></svg>
<div style="left:238.60px;top:179px;font-size:12.5px;line-height:12.5px;color:#1E1E1E;letter-spacing:0.520px;white-space:nowrap;">Employee ID</div>
<div style="left:534.50px;top:179px;font-size:12.5px;line-height:12.5px;color:#1E1E1E;letter-spacing:0.570px;white-space:nowrap;">Title</div>
<div style="left:634.50px;top:179px;font-size:12.5px;line-height:12.5px;color:#1E1E1E;letter-spacing:0.328px;white-space:nowrap;overflow:hidden;width:51.5px;">Birth Date</div>
<div style="left:707.50px;top:179px;font-size:12.5px;line-height:12.5px;color:#1E1E1E;letter-spacing:0.340px;white-space:nowrap;overflow:hidden;width:48.5px;">Hire Date</div>
<div style="left:405.50px;top:179px;font-size:12.5px;line-height:12.5px;color:#1E1E1E;letter-spacing:-0.131px;white-space:nowrap;overflow:hidden;width:53px;">First Name</div>
<svg style="left:467.5px;top:184px;" width="6" height="4" viewBox="0 0 6 4"><path d="M0 0H6L3 3.2Z" fill="#333"/></svg>
<svg style="left:691.5px;top:184px;" width="6" height="4" viewBox="0 0 6 4"><path d="M0 0H6L3 3.2Z" fill="#333"/></svg>
<svg style="left:762.5px;top:184px;" width="6" height="4" viewBox="0 0 6 4"><path d="M0 0H6L3 3.2Z" fill="#333"/></svg>
<svg style="left:614px;top:178px;" width="14" height="11" viewBox="0 0 14 11"><path d="M0.5 6.5H5.5L3 9Z" fill="#333"/><path d="M4 1H13.5V2.5L10 6V10H7.5V6L4 2.5Z" fill="#333"/><path d="M6 2L8.5 4.8" stroke="#fff" stroke-width="0.8"/></svg>
<div style="left:478px;top:194px;width:154px;height:22px;background:#fff;border:2px solid #F5A5A9;border-top-width:1px;"></div>
<div style="left:484px;top:196px;width:93px;height:18px;background:#000;"></div>
<div style="left:315.55px;top:200px;font-size:12.5px;line-height:12.5px;color:#1E1E1E;white-space:nowrap;-webkit-text-stroke:0.15px #1E1E1E;">1</div>
<div style="left:328.75px;top:200px;font-size:12.5px;line-height:12.5px;color:#1E1E1E;letter-spacing:0.623px;white-space:nowrap;overflow:hidden;width:70px;-webkit-text-stroke:0.15px #1E1E1E;">Davolio</div>
<div style="left:405.50px;top:200px;font-size:12.5px;line-height:12.5px;color:#1E1E1E;letter-spacing:0.681px;white-space:nowrap;overflow:hidden;width:36px;-webkit-text-stroke:0.15px #1E1E1E;">Nancy</div>
<div style="left:483.50px;top:200px;font-size:12.5px;line-height:12.5px;color:#fff;letter-spacing:0.317px;white-space:nowrap;overflow:hidden;width:146px;-webkit-text-stroke:0.2px #fff;">Sales Associate</div>
<div style="left:641.25px;top:200px;font-size:12.5px;line-height:12.5px;color:#1E1E1E;letter-spacing:0.182px;white-space:nowrap;-webkit-text-stroke:0.15px #1E1E1E;">08-Dec-48</div>
<div style="left:710.00px;top:200px;font-size:12.5px;line-height:12.5px;color:#1E1E1E;letter-spacing:0.306px;white-space:nowrap;-webkit-text-stroke:0.15px #1E1E1E;">01-May-92</div>
<div style="left:778.00px;top:200px;font-size:12.5px;line-height:12.5px;color:#1E1E1E;letter-spacing:0.275px;white-space:nowrap;overflow:hidden;width:20px;-webkit-text-stroke:0.15px #1E1E1E;">507 - 20th Ave. E.</div>
<div style="left:315.55px;top:220px;font-size:12.5px;line-height:12.5px;color:#1E1E1E;white-space:nowrap;-webkit-text-stroke:0.15px #1E1E1E;">2</div>
<div style="left:328.75px;top:220px;font-size:12.5px;line-height:12.5px;color:#1E1E1E;letter-spacing:0.545px;white-space:nowrap;overflow:hidden;width:70px;-webkit-text-stroke:0.15px #1E1E1E;">Fuller</div>
<div style="left:405.50px;top:220px;font-size:12.5px;line-height:12.5px;color:#1E1E1E;letter-spacing:0.679px;white-space:nowrap;overflow:hidden;width:72px;-webkit-text-stroke:0.15px #1E1E1E;">Andrew</div>
<div style="left:483.50px;top:220px;font-size:12.5px;line-height:12.5px;color:#1E1E1E;letter-spacing:0.448px;white-space:nowrap;overflow:hidden;width:146px;-webkit-text-stroke:0.15px #1E1E1E;">Vice President, Sales</div>
<div style="left:641.96px;top:220px;font-size:12.5px;line-height:12.5px;color:#1E1E1E;letter-spacing:0.180px;white-space:nowrap;-webkit-text-stroke:0.15px #1E1E1E;">19-Feb-52</div>
<div style="left:711.44px;top:220px;font-size:12.5px;line-height:12.5px;color:#1E1E1E;letter-spacing:0.299px;white-space:nowrap;-webkit-text-stroke:0.15px #1E1E1E;">14-Aug-92</div>
<div style="left:778.00px;top:220px;font-size:12.5px;line-height:12.5px;color:#1E1E1E;letter-spacing:0.304px;white-space:nowrap;overflow:hidden;width:20px;-webkit-text-stroke:0.15px #1E1E1E;">908 W. Capital Way</div>
<div style="left:315.55px;top:240px;font-size:12.5px;line-height:12.5px;color:#1E1E1E;white-space:nowrap;-webkit-text-stroke:0.15px #1E1E1E;">3</div>
<div style="left:328.75px;top:240px;font-size:12.5px;line-height:12.5px;color:#1E1E1E;letter-spacing:0.590px;white-space:nowrap;overflow:hidden;width:70px;-webkit-text-stroke:0.15px #1E1E1E;">Leverling</div>
<div style="left:405.50px;top:240px;font-size:12.5px;line-height:12.5px;color:#1E1E1E;letter-spacing:0.588px;white-space:nowrap;overflow:hidden;width:72px;-webkit-text-stroke:0.15px #1E1E1E;">Janet</div>
<div style="left:483.50px;top:240px;font-size:12.5px;line-height:12.5px;color:#1E1E1E;letter-spacing:0.317px;white-space:nowrap;overflow:hidden;width:146px;-webkit-text-stroke:0.15px #1E1E1E;">Sales Associate</div>
<div style="left:641.24px;top:240px;font-size:12.5px;line-height:12.5px;color:#1E1E1E;letter-spacing:0.182px;white-space:nowrap;-webkit-text-stroke:0.15px #1E1E1E;">30-Aug-63</div>
<div style="left:714.35px;top:240px;font-size:12.5px;line-height:12.5px;color:#1E1E1E;letter-spacing:0.285px;white-space:nowrap;-webkit-text-stroke:0.15px #1E1E1E;">01-Apr-92</div>
<div style="left:778.00px;top:240px;font-size:12.5px;line-height:12.5px;color:#1E1E1E;letter-spacing:0.307px;white-space:nowrap;overflow:hidden;width:20px;-webkit-text-stroke:0.15px #1E1E1E;">722 Moss Bay Blvd.</div>
<div style="left:315.55px;top:260px;font-size:12.5px;line-height:12.5px;color:#1E1E1E;white-space:nowrap;-webkit-text-stroke:0.15px #1E1E1E;">4</div>
<div style="left:328.75px;top:260px;font-size:12.5px;line-height:12.5px;color:#1E1E1E;letter-spacing:0.717px;white-space:nowrap;overflow:hidden;width:70px;-webkit-text-stroke:0.15px #1E1E1E;">Peacock</div>
<div style="left:405.50px;top:260px;font-size:12.5px;line-height:12.5px;color:#1E1E1E;letter-spacing:0.601px;white-space:nowrap;overflow:hidden;width:72px;-webkit-text-stroke:0.15px #1E1E1E;">Margaret</div>
<div style="left:483.50px;top:260px;font-size:12.5px;line-height:12.5px;color:#1E1E1E;letter-spacing:0.317px;white-space:nowrap;overflow:hidden;width:146px;-webkit-text-stroke:0.15px #1E1E1E;">Sales Associate</div>
<div style="left:641.24px;top:260px;font-size:12.5px;line-height:12.5px;color:#1E1E1E;letter-spacing:0.182px;white-space:nowrap;-webkit-text-stroke:0.15px #1E1E1E;">19-Sep-37</div>
<div style="left:710.00px;top:260px;font-size:12.5px;line-height:12.5px;color:#1E1E1E;letter-spacing:0.306px;white-space:nowrap;-webkit-text-stroke:0.15px #1E1E1E;">03-May-93</div>
<div style="left:778.00px;top:260px;font-size:12.5px;line-height:12.5px;color:#1E1E1E;letter-spacing:0.326px;white-space:nowrap;overflow:hidden;width:20px;-webkit-text-stroke:0.15px #1E1E1E;">4110 Old Redmond Rd.</div>
<div style="left:315.55px;top:280px;font-size:12.5px;line-height:12.5px;color:#1E1E1E;white-space:nowrap;-webkit-text-stroke:0.15px #1E1E1E;">6</div>
<div style="left:328.75px;top:280px;font-size:12.5px;line-height:12.5px;color:#1E1E1E;letter-spacing:0.800px;white-space:nowrap;overflow:hidden;width:70px;-webkit-text-stroke:0.15px #1E1E1E;">Suyama</div>
<div style="left:405.50px;top:280px;font-size:12.5px;line-height:12.5px;color:#1E1E1E;letter-spacing:0.592px;white-space:nowrap;overflow:hidden;width:72px;-webkit-text-stroke:0.15px #1E1E1E;">Michael</div>
<div style="left:483.50px;top:280px;font-size:12.5px;line-height:12.5px;color:#1E1E1E;letter-spacing:0.317px;white-space:nowrap;overflow:hidden;width:146px;-webkit-text-stroke:0.15px #1E1E1E;">Sales Associate</div>
<div style="left:647.68px;top:280px;font-size:12.5px;line-height:12.5px;color:#1E1E1E;letter-spacing:0.163px;white-space:nowrap;-webkit-text-stroke:0.15px #1E1E1E;">02-Jul-63</div>
<div style="left:714.36px;top:280px;font-size:12.5px;line-height:12.5px;color:#1E1E1E;letter-spacing:0.285px;white-space:nowrap;-webkit-text-stroke:0.15px #1E1E1E;">17-Oct-93</div>
<div style="left:778.00px;top:280px;font-size:12.5px;line-height:12.5px;color:#1E1E1E;letter-spacing:0.320px;white-space:nowrap;overflow:hidden;width:20px;-webkit-text-stroke:0.15px #1E1E1E;">Coventry House</div>
<div style="left:315.55px;top:300px;font-size:12.5px;line-height:12.5px;color:#1E1E1E;white-space:nowrap;-webkit-text-stroke:0.15px #1E1E1E;">7</div>
<div style="left:328.75px;top:300px;font-size:12.5px;line-height:12.5px;color:#1E1E1E;letter-spacing:0.655px;white-space:nowrap;overflow:hidden;width:70px;-webkit-text-stroke:0.15px #1E1E1E;">King</div>
<div style="left:405.50px;top:300px;font-size:12.5px;line-height:12.5px;color:#1E1E1E;letter-spacing:0.601px;white-space:nowrap;overflow:hidden;width:72px;-webkit-text-stroke:0.15px #1E1E1E;">Robert</div>
<div style="left:483.50px;top:300px;font-size:12.5px;line-height:12.5px;color:#1E1E1E;letter-spacing:0.317px;white-space:nowrap;overflow:hidden;width:146px;-webkit-text-stroke:0.15px #1E1E1E;">Sales Associate</div>
<div style="left:639.83px;top:300px;font-size:12.5px;line-height:12.5px;color:#1E1E1E;letter-spacing:0.186px;white-space:nowrap;-webkit-text-stroke:0.15px #1E1E1E;">29-May-60</div>
<div style="left:713.62px;top:300px;font-size:12.5px;line-height:12.5px;color:#1E1E1E;letter-spacing:0.288px;white-space:nowrap;-webkit-text-stroke:0.15px #1E1E1E;">02-Jan-94</div>
<div style="left:778.00px;top:300px;font-size:12.5px;line-height:12.5px;color:#1E1E1E;letter-spacing:0.337px;white-space:nowrap;overflow:hidden;width:20px;-webkit-text-stroke:0.15px #1E1E1E;">Edgeham Hollow</div>
<div style="left:315.55px;top:320px;font-size:12.5px;line-height:12.5px;color:#1E1E1E;white-space:nowrap;-webkit-text-stroke:0.15px #1E1E1E;">8</div>
<div style="left:328.75px;top:320px;font-size:12.5px;line-height:12.5px;color:#1E1E1E;letter-spacing:0.645px;white-space:nowrap;overflow:hidden;width:70px;-webkit-text-stroke:0.15px #1E1E1E;">Callahan</div>
<div style="left:405.50px;top:320px;font-size:12.5px;line-height:12.5px;color:#1E1E1E;letter-spacing:0.615px;white-space:nowrap;overflow:hidden;width:72px;-webkit-text-stroke:0.15px #1E1E1E;">Laura</div>
<div style="left:483.50px;top:320px;font-size:12.5px;line-height:12.5px;color:#1E1E1E;letter-spacing:0.547px;white-space:nowrap;overflow:hidden;width:144px;-webkit-text-stroke:0.15px #1E1E1E;">Inside Sales Coordinator</div>
<div style="left:643.38px;top:320px;font-size:12.5px;line-height:12.5px;color:#1E1E1E;letter-spacing:0.176px;white-space:nowrap;-webkit-text-stroke:0.15px #1E1E1E;">09-Jan-58</div>
<div style="left:712.18px;top:320px;font-size:12.5px;line-height:12.5px;color:#1E1E1E;letter-spacing:0.295px;white-space:nowrap;-webkit-text-stroke:0.15px #1E1E1E;">05-Mar-94</div>
<div style="left:778.00px;top:320px;font-size:12.5px;line-height:12.5px;color:#1E1E1E;letter-spacing:0.280px;white-space:nowrap;overflow:hidden;width:20px;-webkit-text-stroke:0.15px #1E1E1E;">4722 - 11th Ave. N.E.</div>
<div style="left:315.55px;top:340px;font-size:12.5px;line-height:12.5px;color:#1E1E1E;white-space:nowrap;-webkit-text-stroke:0.15px #1E1E1E;">9</div>
<div style="left:328.75px;top:340px;font-size:12.5px;line-height:12.5px;color:#1E1E1E;letter-spacing:0.695px;white-space:nowrap;overflow:hidden;width:70px;-webkit-text-stroke:0.15px #1E1E1E;">Dodsworth</div>
<div style="left:405.50px;top:340px;font-size:12.5px;line-height:12.5px;color:#1E1E1E;letter-spacing:0.702px;white-space:nowrap;overflow:hidden;width:72px;-webkit-text-stroke:0.15px #1E1E1E;">Anne</div>
<div style="left:483.50px;top:340px;font-size:12.5px;line-height:12.5px;color:#1E1E1E;letter-spacing:0.317px;white-space:nowrap;overflow:hidden;width:146px;-webkit-text-stroke:0.15px #1E1E1E;">Sales Associate</div>
<div style="left:643.38px;top:340px;font-size:12.5px;line-height:12.5px;color:#1E1E1E;letter-spacing:0.176px;white-space:nowrap;-webkit-text-stroke:0.15px #1E1E1E;">27-Jan-66</div>
<div style="left:711.45px;top:340px;font-size:12.5px;line-height:12.5px;color:#1E1E1E;letter-spacing:0.299px;white-space:nowrap;-webkit-text-stroke:0.15px #1E1E1E;">15-Nov-94</div>
<div style="left:778.00px;top:340px;font-size:12.5px;line-height:12.5px;color:#1E1E1E;letter-spacing:0.307px;white-space:nowrap;overflow:hidden;width:20px;-webkit-text-stroke:0.15px #1E1E1E;">7 Houndstooth Rd.</div>
<div style="left:216px;top:354px;width:18px;height:20px;background:#DFE2E7;"></div>
<div style="left:216px;top:354px;width:18px;height:1px;background:#A3A9B1;"></div>
<div style="left:284.50px;top:360px;font-size:12.5px;line-height:12.5px;color:#1E1E1E;letter-spacing:0.934px;white-space:nowrap;-webkit-text-stroke:0.15px #1E1E1E;">(New)</div>
<svg style="left:220px;top:359px;" width="11" height="11" viewBox="0 0 11 11"><path d="M5.5 0.8V10.2M0.8 5.5H10.2M2.2 2.2L8.8 8.8M8.8 2.2L2.2 8.8" stroke="#000" stroke-width="1.2"/></svg>
<div style="left:216px;top:374px;width:582px;height:1px;background:#C6CFE3;"></div>
<div style="left:216px;top:374px;width:18px;height:1px;background:#C6CFE3;"></div>
<div style="left:216px;top:152px;width:126px;height:23px;background:#fff;border:1px solid #E2C9A4;border-bottom:none;border-right:none;border-top-left-radius:5px"></div>
<svg style="left:222px;top:156px;" width="16" height="13" viewBox="0 0 16 13"><rect x="0.5" y="0.5" width="15" height="12" fill="#F3F6FB" stroke="#5C7BAA" stroke-width="1"/><rect x="0" y="0" width="16" height="2.5" fill="#5C7BAA"/><path d="M0.5 5.5H15.5M0.5 8.5H15.5M5.5 2.5V12.5M10.5 2.5V12.5" stroke="#9DB2D2" stroke-width="1"/><path d="M0 12.5H16" stroke="#3B5584" stroke-width="1"/></svg>
<div style="left:246.50px;top:157px;font-size:11.5px;line-height:11.5px;color:#B0262C;font-weight:bold;white-space:nowrap;">Employees</div>
<svg style="left:782px;top:159px;" width="10" height="8" viewBox="0 0 10 8"><path d="M1 0.5L9 7.5M9 0.5L1 7.5" stroke="#333" stroke-width="1.2"/></svg>
<div style="left:216px;top:558px;width:582px;height:1px;background:#A9B0B9;"></div>
<div style="left:216px;top:559px;width:582px;height:17px;background:linear-gradient(#F4F5F7 0,#F4F5F7 52%,#E5E7EA 52%,#E5E7EA 100%)"></div>
<div style="left:216px;top:576px;width:582px;height:1px;background:#BFC4CA;"></div>
<div style="left:221.50px;top:562px;font-size:12px;line-height:12px;color:#444C57;letter-spacing:-0.645px;white-space:nowrap;">Record:</div>
<svg style="left:266px;top:564px;" width="8" height="8" viewBox="0 0 8 8"><rect x="0.5" y="0" width="1.2" height="7.5" fill="#3A414C"/><path d="M7 0V7.5L2.5 3.75Z" fill="#3A414C"/></svg>
<svg style="left:284px;top:564px;" width="6" height="8" viewBox="0 0 6 8"><path d="M5 0V7.5L0.5 3.75Z" fill="#C4C4C4"/></svg>
<div style="left:295px;top:560px;width:50px;height:16px;background:#fff;border:1px solid #ABABAB;"></div>
<div style="left:297.50px;top:562px;font-size:12px;line-height:12px;color:#000;letter-spacing:-0.254px;white-space:nowrap;">1 of 9</div>
<svg style="left:353px;top:564px;" width="6" height="8" viewBox="0 0 6 8"><path d="M0.5 0V7.5L5 3.75Z" fill="#3A414C"/></svg>
<svg style="left:369px;top:564px;" width="8" height="8" viewBox="0 0 8 8"><path d="M0.5 0V7.5L5 3.75Z" fill="#3A414C"/><rect x="5.8" y="0" width="1.2" height="7.5" fill="#3A414C"/></svg>
<svg style="left:383px;top:563px;" width="14" height="9" viewBox="0 0 14 9"><path d="M0.5 1V8.5L5 4.75Z" fill="#3A414C"/><path d="M9 1V8.5M5.5 4.75H12.5M6.5 2L11.5 7.5M11.5 2L6.5 7.5" stroke="#F2C12E" stroke-width="1.3"/></svg>
<div style="left:402px;top:559px;width:1px;height:17px;background:#B9BEC6;"></div>
<div style="left:403px;top:559px;width:1px;height:17px;background:#FFFFFF;"></div>
<div style="left:482px;top:559px;width:1px;height:17px;background:#B9BEC6;"></div>
<div style="left:483px;top:559px;width:1px;height:17px;background:#FFFFFF;"></div>
<div style="left:581px;top:559px;width:1px;height:17px;background:#B9BEC6;"></div>
<div style="left:582px;top:559px;width:1px;height:17px;background:#FFFFFF;"></div>
<svg style="left:410px;top:560px;" width="17" height="17" viewBox="0 0 17 17"><path d="M1 1H12V3L8.2 6.8V12H4.8V6.8L1 3Z" fill="#A8A8A8"/><path d="M7.5 9L14.5 15.5M14.5 9L7.5 15.5" stroke="#A8A8A8" stroke-width="1.2"/></svg>
<div style="left:429.50px;top:562px;font-size:12px;line-height:12px;color:#9A9A9A;letter-spacing:-0.204px;white-space:nowrap;">No Filter</div>
<div style="left:488px;top:560px;width:70px;height:16px;background:#fff;border:1px solid #ABABAB;"></div>
<div style="left:490.50px;top:562px;font-size:12px;line-height:12px;color:#000;letter-spacing:-0.920px;white-space:nowrap;">Search</div>
<div style="left:583px;top:559px;width:215px;height:17px;background:#E9E9E9;"></div>
<div style="left:584px;top:560px;width:15px;height:15px;background:#fff;border:1px solid #A0A0A0;"></div>
<svg style="left:588px;top:564px;" width="6" height="8" viewBox="0 0 6 8"><path d="M5 0V7L0.5 3.5Z" fill="#606060"/></svg>
<div style="left:598px;top:560px;width:62px;height:15px;background:#fff;border:1px solid #A0A0A0;"></div>
<div style="left:782px;top:560px;width:15px;height:15px;background:#fff;border:1px solid #A0A0A0;"></div>
<svg style="left:787px;top:564px;" width="6" height="8" viewBox="0 0 6 8"><path d="M0.5 0V7L5 3.5Z" fill="#606060"/></svg>
<div style="left:0px;top:577px;width:800px;height:22px;background:#F0F0F0;"></div>
<div style="left:8.50px;top:582px;font-size:12px;line-height:12px;color:#505050;letter-spacing:-0.302px;white-space:nowrap;">Datasheet View</div>
<div style="left:642.50px;top:582px;font-size:12px;line-height:12px;color:#444;letter-spacing:-0.565px;white-space:nowrap;">Num Lock</div>
<div style="left:711px;top:577px;width:38px;height:22px;background:#C8C8C8;"></div>
<svg style="left:722px;top:580px;" width="16" height="15" viewBox="0 0 16 15"><rect x="1.5" y="1.5" width="13" height="12" fill="none" stroke="#6D6D6D" stroke-width="1.3"/><path d="M1.5 4.5H14.5M5 4.5V13.5" stroke="#6D6D6D" stroke-width="1.1"/><path d="M7 7.5H9M10.5 7.5H13M7 10.5H9M10.5 10.5H13" stroke="#6D6D6D" stroke-width="1.1"/></svg>
<svg style="left:760px;top:580px;" width="17" height="15" viewBox="0 0 17 15"><path d="M1.5 1.5V9.5H8.5Z" fill="none" stroke="#6D6D6D" stroke-width="1.1"/><path d="M6.5 9.5L14 2" stroke="#6D6D6D" stroke-width="2.3"/><path d="M5.8 10.2L6.6 8.2L8 9.6Z" fill="#6D6D6D"/><rect x="1.5" y="10.5" width="14" height="3.5" fill="none" stroke="#6D6D6D" stroke-width="1.1"/><path d="M4.5 11V12M7.5 11V12M10.5 11V12M13 11V12" stroke="#6D6D6D" stroke-width="1"/></svg>
<div style="left:0px;top:0px;width:1px;height:600px;background:#A4373A;"></div>
<div style="left:799px;top:0px;width:1px;height:600px;background:#A4373A;"></div>
<div style="left:0px;top:599px;width:800px;height:1px;background:#A4373A;"></div>
<div style="left:268px;top:107px;width:175px;height:222px;background:#fff;border:1px solid #C2C2C2;"></div>
<div style="left:301.50px;top:114.5px;font-size:12px;line-height:12px;color:#262626;letter-spacing:-0.198px;white-space:nowrap;">Clear All Filters</div>
<div style="left:302px;top:125.5px;width:8px;height:1px;background:#262626;"></div>
<div style="left:301.50px;top:138.5px;font-size:12px;line-height:12px;color:#262626;letter-spacing:-0.224px;white-space:nowrap;">Filter By Form</div>
<div style="left:302px;top:149.5px;width:7px;height:1px;background:#262626;"></div>
<div style="left:301.50px;top:162.5px;font-size:12px;line-height:12px;color:#262626;letter-spacing:-0.209px;white-space:nowrap;">Apply Filter/Sort</div>
<div style="left:325px;top:173.5px;width:6px;height:1px;background:#262626;"></div>
<div style="left:301.50px;top:188.5px;font-size:12px;line-height:12px;color:#262626;letter-spacing:-0.215px;white-space:nowrap;">Advanced Filter/Sort...</div>
<div style="left:385px;top:199.5px;width:8px;height:1px;background:#262626;"></div>
<div style="left:301.50px;top:212.5px;font-size:12px;line-height:12px;color:#A6A6A6;letter-spacing:-0.230px;white-space:nowrap;">Load from Query...</div>
<div style="left:357px;top:223.5px;width:9px;height:1px;background:#A6A6A6;"></div>
<div style="left:301.50px;top:236.5px;font-size:12px;line-height:12px;color:#A6A6A6;letter-spacing:-0.257px;white-space:nowrap;">Save As Query</div>
<div style="left:331px;top:247.5px;width:8px;height:1px;background:#A6A6A6;"></div>
<div style="left:301.50px;top:260.5px;font-size:12px;line-height:12px;color:#A6A6A6;letter-spacing:-0.238px;white-space:nowrap;">Delete Tab</div>
<div style="left:316px;top:271.5px;width:2px;height:1px;background:#A6A6A6;"></div>
<div style="left:301.50px;top:284.5px;font-size:12px;line-height:12px;color:#A6A6A6;letter-spacing:-0.228px;white-space:nowrap;">Clear Grid</div>
<div style="left:332px;top:295.5px;width:9px;height:1px;background:#A6A6A6;"></div>
<div style="left:301.50px;top:308.5px;font-size:12px;line-height:12px;color:#A6A6A6;letter-spacing:-0.256px;white-space:nowrap;">Close</div>
<div style="left:302px;top:319.5px;width:8px;height:1px;background:#A6A6A6;"></div>
<div style="left:302px;top:181px;width:136px;height:1px;background:#DADADA;"></div>
<svg style="left:273px;top:112px;" width="19" height="19" viewBox="0 0 19 19"><path d="M2 2H13V3.6L8.7 8V12.5H6.3V8L2 3.6Z" fill="#6D6D6D"/><path d="M6.3 12.5H9" stroke="#6D6D6D" stroke-width="1"/><path d="M8.8 9.5L16.2 16.8M16.2 9.5L8.8 16.8" stroke="#DC5A2E" stroke-width="1.4"/></svg>
<svg style="left:273px;top:136px;" width="19" height="19" viewBox="0 0 19 19"><path d="M1 1H8V2.5L5.6 4.9V8H3.4V4.9L1 2.5Z" fill="#6D6D6D"/><rect x="5.5" y="4.5" width="11.5" height="12.5" fill="#fff" stroke="#555" stroke-width="1"/><rect x="5" y="4" width="12.5" height="2.5" fill="#3E7CC2"/><path d="M7 10.5H11M7 14.5H11" stroke="#777" stroke-width="1"/><rect x="12.5" y="9" width="3" height="3" fill="none" stroke="#555" stroke-width="1"/><rect x="12.5" y="13" width="3" height="3" fill="none" stroke="#555" stroke-width="1"/></svg>
<svg style="left:273px;top:160px;" width="18" height="19" viewBox="0 0 18 19"><path d="M1 1H12V3L8.2 6.8V11H4.8V6.8L1 3Z" fill="#6D6D6D"/><path d="M1.5 12.5H6M7 12.5H11.5M12.5 12.5H17M1.5 16.5H6M7 16.5H11.5M12.5 16.5H17" stroke="#3E7CC2" stroke-width="1.2"/><path d="M1.5 14.5H6M7 14.5H11.5M12.5 14.5H17" stroke="#777" stroke-width="1.2"/></svg>
<svg style="left:273px;top:186px;" width="19" height="17" viewBox="0 0 19 17"><path d="M1 1H12V3L8.2 6.8V11H4.8V6.8L1 3Z" fill="#6D6D6D"/><path d="M1 15.5H2.3M3.9 15.5H5.2M6.8 15.5H8.1" stroke="#444" stroke-width="1.3"/><path d="M8.5 13.5L15.5 6.5L17.5 8.5L10.5 15.5Z" fill="#3E7CC2"/><path d="M8.2 13.8L7.5 16.5L10.2 15.8Z" fill="#3E7CC2"/><path d="M14.5 7.5L16.5 9.5" stroke="#fff" stroke-width="0.8"/></svg>
<svg style="left:273px;top:210px;" width="19" height="19" viewBox="0 0 19 19"><path d="M1.5 17V6H9L11 3.5H15.5V8H16.5V17Z" fill="#DDDDDD"/><path d="M1.5 17L4.5 9.5H17.5L15 17Z" fill="#CDCDCD"/><path d="M1 1H9V2.6L6.4 5.2V9H3.6V5.2L1 2.6Z" fill="#B4B4B4"/></svg>
<svg style="left:273px;top:234px;" width="19" height="19" viewBox="0 0 19 19"><rect x="3" y="2.7" width="14" height="14.1" fill="#B4B4B4"/><rect x="5.8" y="4.3" width="8.8" height="4.7" fill="#fff"/><rect x="5.8" y="11.8" width="8.8" height="3.4" fill="#fff"/><rect x="8" y="12.5" width="3" height="2.7" fill="#B4B4B4"/><path d="M0.5 0.5H9.5V2.3L6.6 5.2V9.5H3.4V5.2L0.5 2.3Z" fill="#B4B4B4" stroke="#fff" stroke-width="0.8"/></svg>
<svg style="left:273px;top:283px;" width="18" height="16" viewBox="0 0 18 16"><path d="M2 1.5L16 14.5M15.5 1.5L2 14.5" stroke="#B4B4B4" stroke-width="1.9" stroke-linecap="round"/></svg>
<svg style="left:273px;top:308px;" width="19" height="16" viewBox="0 0 19 16"><path d="M1 1H12L14.5 4H15V6.5H1Z" fill="#B4B4B4"/><rect x="8" y="5.5" width="9.5" height="9.5" rx="1.5" fill="#B4B4B4"/><path d="M10.5 8L15 12.5M15 8L10.5 12.5" stroke="#fff" stroke-width="1.2"/></svg>
<svg style="left:200px;top:60px" width="90" height="100" viewBox="200 60 90 100"><defs><filter id="sh" x="-30%" y="-30%" width="160%" height="160%"><feDropShadow dx="1.5" dy="2" stdDeviation="1.6" flood-color="#000" flood-opacity="0.35"/></filter></defs><g filter="url(#sh)" fill="#E98A3A"><circle cx="235.5" cy="96.1" r="18.7"/><path d="M250 88L268.6 95.7L250 103.5Z"/></g></svg>
<svg style="left:230px;top:86px;" width="12" height="20" viewBox="0 0 12 20"><path d="M2.2 3.4L6.2 1.8H10.2V19H5.8V6.2L3.1 7.1Z" fill="#fff"/></svg>
<svg style="left:370px;top:90px" width="90" height="70" viewBox="370 90 90 70"><g filter="url(#sh)" fill="#E98A3A"><circle cx="419.4" cy="121.8" r="19"/><path d="M404 114.8L386.9 121.8L404 128.8Z"/></g></svg>
<div style="left:413.43px;top:111.19999999999999px;font-size:24px;line-height:24px;color:#fff;font-weight:bold;white-space:nowrap;">2</div>
</body></html>
